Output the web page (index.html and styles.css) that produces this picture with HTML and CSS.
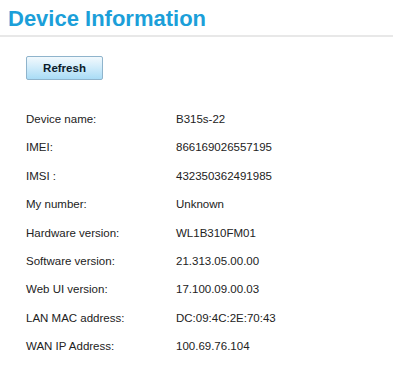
FILE: index.html
```html
<!DOCTYPE html>
<html>
<head>
<meta charset="utf-8">
<link rel="stylesheet" href="styles.css">
</head>
<body>
<div class="page">
  <h1 class="title">Device Information</h1>
  <div class="content">
    <button class="btn">Refresh</button>
    <div class="info">
      <div class="row"><span class="label">Device name:</span><span class="value">B315s-22</span></div>
      <div class="row"><span class="label">IMEI:</span><span class="value">866169026557195</span></div>
      <div class="row"><span class="label">IMSI :</span><span class="value">432350362491985</span></div>
      <div class="row"><span class="label">My number:</span><span class="value">Unknown</span></div>
      <div class="row"><span class="label">Hardware version:</span><span class="value">WL1B310FM01</span></div>
      <div class="row"><span class="label">Software version:</span><span class="value">21.313.05.00.00</span></div>
      <div class="row"><span class="label">Web UI version:</span><span class="value">17.100.09.00.03</span></div>
      <div class="row"><span class="label">LAN MAC address:</span><span class="value">DC:09:4C:2E:70:43</span></div>
      <div class="row"><span class="label">WAN IP Address:</span><span class="value">100.69.76.104</span></div>
    </div>
  </div>
</div>
</body>
</html>
```
FILE: styles.css
```css
html, body {
  margin: 0;
  padding: 0;
  background: #ffffff;
}
.page {
  font-family: "Liberation Sans", Arial, sans-serif;
  width: 393px;
}
.title {
  margin: 0;
  padding: 5px 0 0 8px;
  height: 30px;
  font-size: 22px;
  line-height: 28px;
  font-weight: bold;
  color: #1c9fd9;
  border-bottom: 2px solid #e8e8e8;
}
.content {
  padding: 19px 0 0 26px;
}
.btn {
  display: block;
  box-sizing: border-box;
  width: 77px;
  height: 24px;
  padding: 0;
  border: 1px solid #8fb4cc;
  border-radius: 2px;
  background: linear-gradient(to bottom, #f2f9fd 0%, #d6eefb 40%, #a9dcf6 100%);
  font-family: "Liberation Sans", Arial, sans-serif;
  font-size: 11.5px;
  font-weight: bold;
  color: #0b1b2b;
}
.info {
  margin-top: 25px;
  font-size: 11.5px;
  color: #222222;
}
.row {
  display: flex;
  height: 28.4px;
  line-height: 28.4px;
}
.label {
  width: 150px;
}
```
